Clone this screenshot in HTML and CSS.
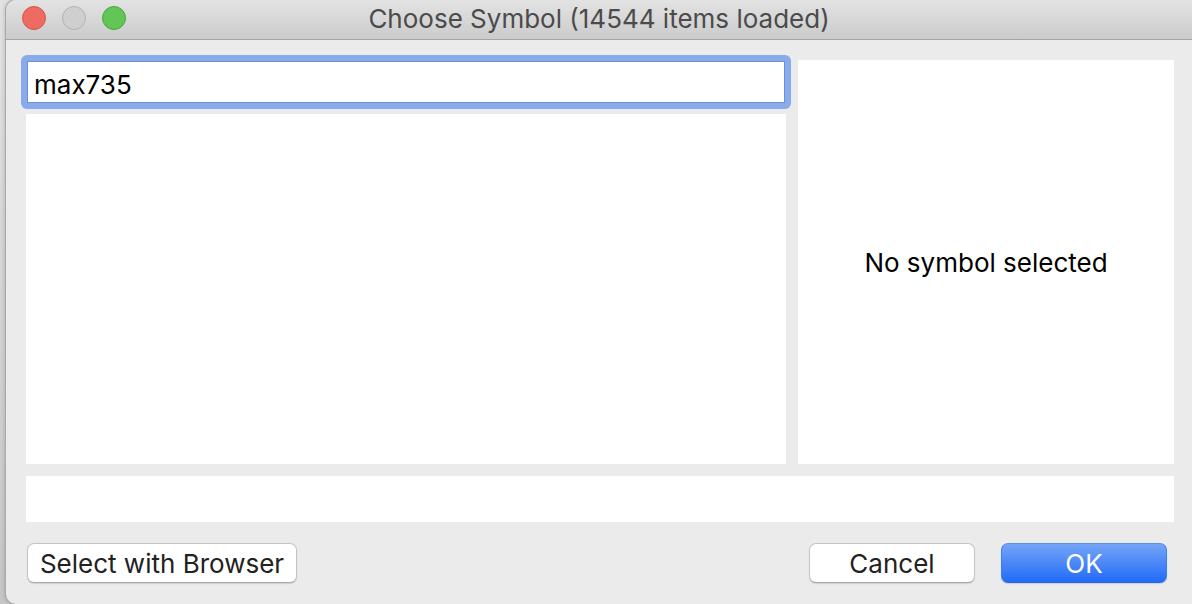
FILE: index.html
```html
<!DOCTYPE html>
<html lang="en">
<head>
<meta charset="utf-8">
<title>Choose Symbol</title>
<link rel="stylesheet" href="styles.css">
</head>
<body>
<main class="dialog">
  <header class="titlebar">
    <div class="lights">
      <button class="light light-close" type="button" aria-label="Close"></button>
      <button class="light light-minimize" type="button" aria-label="Minimize" disabled></button>
      <button class="light light-zoom" type="button" aria-label="Zoom"></button>
    </div>
    <h1 class="title">Choose Symbol (14544 items loaded)</h1>
  </header>
  <form class="content">
    <div class="panes">
      <div class="browse">
        <div class="search-ring">
          <input class="search" type="text" value="max735" aria-label="Filter symbols">
        </div>
        <div class="list"></div>
      </div>
      <section class="preview">No symbol selected</section>
    </div>
    <div class="details"></div>
    <footer class="actions">
      <button class="button button-browser" type="button">Select with Browser</button>
      <button class="button" type="button">Cancel</button>
      <button class="button button-primary" type="submit">OK</button>
    </footer>
  </form>
</main>
</body>
</html>
```
FILE: styles.css
```css
* {
  box-sizing: border-box;
}

body {
  margin: 0;
  padding-left: 6px;
  background: linear-gradient(#e2e2e2, #c6c6c6);
  font-family: Inter, "Liberation Sans", sans-serif;
  font-size: 26px;
  line-height: 30px;
  color: #000;
}

.dialog {
  display: flex;
  flex-direction: column;
  min-height: 100vh;
  background: #ebebeb;
  border-radius: 10px 0 0 10px;
  box-shadow: 0 0 0 1px #a9a9a9, 0 0 5px rgba(0, 0, 0, 0.3);
  overflow: hidden;
}

.titlebar {
  display: grid;
  grid-template-columns: 1fr auto 1fr;
  align-items: center;
  height: 40px;
  padding: 0 16px 3px;
  background: linear-gradient(#e3e3e3, #cbcbcb);
  border-bottom: 1px solid #a5a5a5;
}

.lights {
  display: flex;
  gap: 16px;
}

.light {
  width: 24px;
  height: 24px;
  padding: 0;
  border: 1px solid;
  border-radius: 50%;
}

.light-close {
  background: #ed6b60;
  border-color: #d15549;
}

.light-minimize {
  background: #cfcfcf;
  border-color: #b3b3b3;
}

.light-zoom {
  background: #61c655;
  border-color: #4aa73c;
}

.title {
  margin: 0;
  padding-top: 2px;
  font-size: 26px;
  font-weight: 400;
  color: #4b4b4b;
}

.content {
  display: flex;
  flex: 1;
  flex-direction: column;
  gap: 12px;
  padding: 20px 18px 21px 20px;
}

.panes {
  display: grid;
  flex: 1;
  grid-template-columns: 760fr 376fr;
  gap: 12px;
}

.browse {
  display: flex;
  flex-direction: column;
  gap: 5px;
}

.search-ring {
  display: flex;
  margin: -5px -5px 0;
  padding: 6px;
  border-radius: 6px;
  background: #89abeb;
}

.search {
  flex: 1;
  min-width: 0;
  height: 42px;
  padding: 4px 6px 0;
  border: 1px solid #6a90d8;
  border-radius: 0;
  outline: 0;
  background: #fff;
  font: inherit;
  color: inherit;
}

.list {
  flex: 1;
  background: #fff;
}

.preview {
  display: flex;
  align-items: center;
  justify-content: center;
  padding-top: 2px;
  background: #fff;
}

.details {
  height: 46px;
  background: #fff;
}

.actions {
  display: flex;
  gap: 26px;
  padding: 9px 7px 0 1px;
}

.button {
  width: 166px;
  height: 40px;
  padding: 1px 0 0;
  border: 1px solid #c4c4c4;
  border-bottom-color: #ababab;
  border-radius: 7px;
  box-shadow: 0 1px 1px rgba(0, 0, 0, 0.12);
  background: #fff;
  font: inherit;
  color: #222;
}

.button-browser {
  width: 270px;
  margin-right: auto;
}

.button-primary {
  border-color: #5a8fec #3f7cee #2466ee;
  background: linear-gradient(#74a4f7, #226bf8);
  color: #fff;
}
```
